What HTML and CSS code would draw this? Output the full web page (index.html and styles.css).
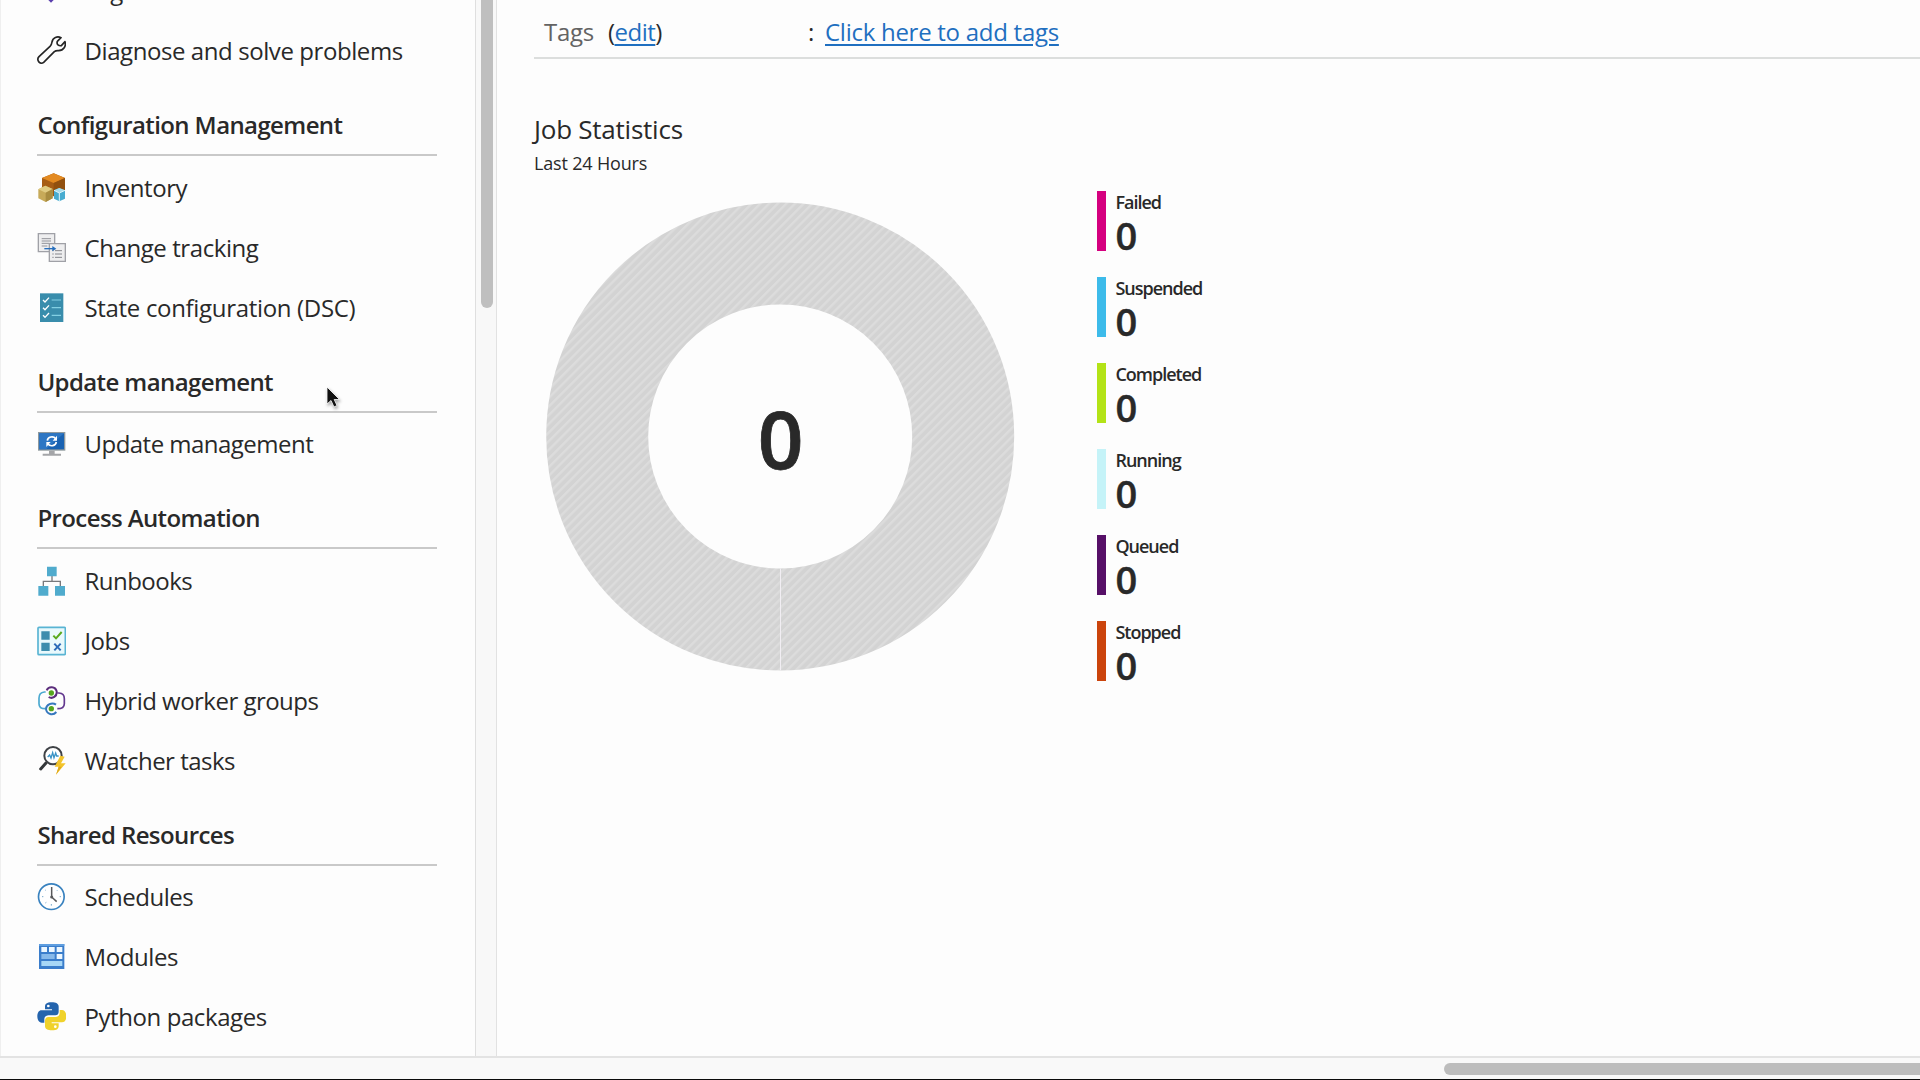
FILE: index.html
```html
<!DOCTYPE html>
<html lang="en">
<head>
<meta charset="utf-8">
<title>Automation Account</title>
<link rel="stylesheet" href="styles.css">
</head>
<body>
<div class="app">
  <div class="panes">
    <nav class="sidebar">
      <div class="menu">
        <a class="item"><svg class="icon" viewBox="108 -72 90 90"><path d="M153 8 116 -29V-66H153L190 -29Z" fill="#5b3fae"/></svg><span class="label">Tags</span></a>
        <a class="item"><svg class="icon" viewBox="108 108 90 90"><path d="M183 113C172 107 158 113 156 126Q155 134 150 139L117 170C108 180 120 196 131 187L163 155Q168 151 176 152C191 151 199 138 195 125L184 137Q178 138 173 134Q170 129 172 124Z" fill="none" stroke="#252525" stroke-width="5" stroke-linejoin="round"/></svg><span class="label">Diagnose and solve problems</span></a>
        <h2 class="heading">Configuration Management</h2>
        <a class="item"><svg class="icon" viewBox="48 36 90 90"><path d="M101 37 135 51V92L101 106 66 92V51Z" fill="#a75d15"/><path d="M101 37 135 51 101 66 66 51Z" fill="#e38a21"/><path d="M101 66 135 51V92L101 106Z" fill="#91500f"/><path d="M76 74 98 84V112L77 123 55 112V85Z" fill="#c7aa59"/><path d="M76 74 98 84 77 95 55 85Z" fill="#e0cb82"/><path d="M77 95 98 84V112L77 123Z" fill="#a88c40"/><path d="M118 81 135 88V113L118 121 102 113V88Z" fill="#48acd0"/><path d="M118 81 135 88 118 96 102 88Z" fill="#a9dceb"/><path d="M118 96V121M102 88 118 96 135 88" stroke="#dff4fa" stroke-width="3" fill="none"/></svg><span class="label">Inventory</span></a>
        <a class="item"><svg class="icon" viewBox="48 216 90 90"><path d="M55 218H104V272H55Z" fill="#eeeeef" stroke="#a0a1a7" stroke-width="4"/><path d="M65 233H93M65 240H93M65 247H88M65 255H82" stroke="#929399" stroke-width="3"/><path d="M88 248H136V301H88Z" fill="#eeeeef" stroke="#a0a1a7" stroke-width="4"/><path d="M97 269H101M105 269H126M97 279H101M105 279H126M97 289H101M105 289H126" stroke="#85868c" stroke-width="3"/><path d="M73 263H101" stroke="#286fbd" stroke-width="4"/><path d="M97 255 109 263 97 271Z" fill="#286fbd"/></svg><span class="label">Change tracking</span></a>
        <a class="item"><svg class="icon" viewBox="48 396 90 90"><path d="M60 397H130V483H60Z" fill="#398dac"/><path d="M69 417 75 423 87 410M69 440 75 446 87 433M69 463 75 469 87 456" fill="none" stroke="#fff" stroke-width="4"/><path d="M95 417H123M95 440H123M95 463H123" stroke="#83d0e3" stroke-width="3.5"/></svg><span class="label wide">State configuration (DSC)</span></a>
        <h2 class="heading">Update management</h2>
        <a class="item"><svg class="icon" viewBox="48 207 90 90"><path d="M54 216H136V272H54Z" fill="#8f999d"/><path d="M58 220H132V268H58Z" fill="#1962b2"/><path d="M58 220H132L78 268H58Z" fill="#2c76c4"/><path d="M87 272H104V281H123V287H68V281H87Z" fill="#a4a5a8"/><path d="M82 242C83 230 100 227 107 236M109 246C107 258 91 261 84 252" fill="none" stroke="#fff" stroke-width="5"/><path d="M111 227V242H98ZM79 261V246H92Z" fill="#fff"/></svg><span class="label tight">Update management</span></a>
        <h2 class="heading">Process Automation</h2>
        <a class="item"><svg class="icon" viewBox="48 15 90 90"><path d="M96 43V61M70 77V61H121V77" fill="none" stroke="#78797c" stroke-width="4"/><path d="M81 17H110V46H81ZM55 75H85V104H55ZM105 75H135V104H105Z" fill="#50abcd"/></svg><span class="label tight">Runbooks</span></a>
        <a class="item"><svg class="icon" viewBox="48 195 90 90"><rect x="54" y="199" width="82" height="82" rx="3" fill="#e9f9fc" stroke="#59b4d3" stroke-width="5"/><path d="M64 211H89V236H64ZM64 245H89V270H64Z" fill="#3d8dad"/><path d="M100 224 108 232 125 213" fill="none" stroke="#59a91d" stroke-width="6"/><path d="M103 248 122 268M122 248 103 268" stroke="#2b6bb8" stroke-width="6"/></svg><span class="label">Jobs</span></a>
        <a class="item"><svg class="icon" viewBox="48 375 90 90"><path d="M77 393H73Q57 395 57 411V428Q57 443 76 443" fill="none" stroke="#4ba9d0" stroke-width="5"/><path d="M112 396H117Q133 397 133 413V428Q133 443 112 443" fill="none" stroke="#63388f" stroke-width="5"/><path d="M80 388C86 375 106 376 110 391C112 406 97 415 86 408" fill="none" stroke="#5b2d7c" stroke-width="6"/><path d="M108 431C96 422 78 431 78 444C80 460 99 465 109 453" fill="none" stroke="#3678be" stroke-width="6"/><circle cx="94" cy="396" r="8" fill="#55a51c"/><circle cx="94" cy="443" r="8" fill="#55a51c"/></svg><span class="label tight">Hybrid worker groups</span></a>
        <a class="item"><svg class="icon" viewBox="48 555 90 90"><path d="M78 606 62 624" stroke="#34373a" stroke-width="9" stroke-linecap="round"/><circle cx="99" cy="584" r="26" fill="#fff" stroke="#3f4246" stroke-width="6"/><path d="M83 588 89 582 93 591 98 575 102 590 107 576 110 585H116" fill="none" stroke="#3993c6" stroke-width="4"/><path d="M121 584 104 617H116L108 641 137 607H123L134 587Z" fill="#f3c42b"/><path d="M116 617H125L108 641Z" fill="#dda81c"/></svg><span class="label tight">Watcher tasks</span></a>
        <h2 class="heading">Shared Resources</h2>
        <a class="item"><svg class="icon" viewBox="48 66 90 90"><circle cx="94" cy="110" r="38.5" fill="#fff" stroke="#3982bf" stroke-width="5"/><path d="M95 81V111L110 125" fill="none" stroke="#58595b" stroke-width="4.5"/><circle cx="95" cy="111" r="4.5" fill="#58595b"/><path d="M94 132V137M66 110H70M119 110H123M76 90 78 92M113 90 111 92M76 129 79 127" stroke="#78a9cc" stroke-width="3"/></svg><span class="label tight">Schedules</span></a>
        <a class="item"><svg class="icon" viewBox="48 246 90 90"><path d="M57 252H133V327H57Z" fill="#3a7dcb"/><path d="M57 252H133V258H57Z" fill="#5e9ee0"/><path d="M64 261H81V276H64ZM87 261H104V276H87ZM110 261H127V276H110ZM110 282H127V297H110Z" fill="#ecf7ff"/><path d="M64 282H104V297H64Z" fill="#86b9ea"/><path d="M64 303H127V318H64Z" fill="#a7d7f6"/></svg><span class="label">Modules</span></a>
        <a class="item"><svg class="icon" viewBox="48 426 90 90"><path d="M95 427C80 427 75 432 75 440V448H96V451H65C56 451 52 459 52 469C52 480 57 488 65 488H73V478C73 470 79 466 86 466H106C112 466 116 462 116 456V440C116 431 108 427 95 427Z" fill="#2464ad"/><path d="M96 511C111 511 116 506 116 498V490H95V487H126C135 487 139 479 139 469C139 458 134 450 126 450H119V460C119 467 113 471 106 471H86C79 471 75 476 75 482V498C75 507 83 511 96 511Z" fill="#f0d22b"/><circle cx="85" cy="438" r="4" fill="#fff"/><circle cx="106" cy="500" r="4" fill="#fff"/></svg><span class="label">Python packages</span></a>
      </div>
    </nav>
    <div class="vscroll"><div class="vthumb"></div></div>
    <main class="main">
      <div class="tagrow">
        <div class="taglabel"><span class="muted">Tags</span><span class="edit">(<a class="link">edit</a>)</span></div>
        <span class="colon">:</span>
        <a class="link">Click here to add tags</a>
      </div>
      <h1 class="title">Job Statistics</h1>
      <p class="subtitle">Last 24 Hours</p>
      <div class="stats">
        <svg class="donut" viewBox="0 0 470 470">
          <defs><pattern id="hatch" width="6.12" height="6.12" patternUnits="userSpaceOnUse" patternTransform="rotate(45)"><rect width="6.12" height="6.12" fill="#d3d3d3"/><rect width="2.4" height="6.12" fill="#dcdcdc"/></pattern></defs>
          <circle cx="235.2" cy="235.5" r="183" fill="none" stroke="url(#hatch)" stroke-width="102"/>
          <path d="M235.5 367.5V469.5" stroke="#f1eef3" stroke-width="1"/>
          <text class="total" x="235.5" y="267.5" text-anchor="middle">0</text>
        </svg>
        <ul class="legend">
          <li class="stat failed"><span class="name">Failed</span><span class="count">0</span></li>
          <li class="stat suspended"><span class="name">Suspended</span><span class="count">0</span></li>
          <li class="stat completed"><span class="name">Completed</span><span class="count">0</span></li>
          <li class="stat running"><span class="name">Running</span><span class="count">0</span></li>
          <li class="stat queued"><span class="name">Queued</span><span class="count">0</span></li>
          <li class="stat stopped"><span class="name">Stopped</span><span class="count">0</span></li>
        </ul>
      </div>
    </main>
  </div>
  <div class="hscroll"><div class="hthumb"></div></div>
  <svg class="cursor" viewBox="0 0 16 24"><path d="M1 1V18L5 14.5 8 21 11 19.5 8.2 13.5H13.5Z" fill="#111" stroke="#fff" stroke-width=".8"/></svg>
</div>
</body>
</html>
```
FILE: styles.css
```css
* { box-sizing: border-box; }
body { margin: 0; background: #fdfdfd; color: #292929; font-family: "Open Sans", "Noto Sans", sans-serif; font-size: 24px; }
h1, h2, p, ul { margin: 0; padding: 0; font-weight: 400; }
.app { position: relative; display: flex; flex-direction: column; width: 1920px; height: 1080px; overflow: hidden; border-bottom: 1px solid #0b0b0b; }
.panes { display: flex; flex: 1; min-height: 0; }
.sidebar { width: 475px; overflow: hidden; border-left: 1px solid #efefef; padding: 0 37.6px 0 35px; }
.menu { display: flex; flex-direction: column; margin-top: -38.9px; }
.item { display: flex; align-items: center; flex: none; height: 60px; gap: 18.5px; white-space: nowrap; }
.icon { width: 30px; height: 30px; flex: none; }
.label { padding-bottom: 1.2px; letter-spacing: -.42px; }
.tight { letter-spacing: -.52px; }
.wide { letter-spacing: -.32px; }
.heading { flex: none; height: 75px; margin: 0 0 1.5px 1.4px; padding-top: 27px; border-bottom: 2px solid #c9c9c9; font-size: 24px; font-weight: 600; line-height: 34px; letter-spacing: -.6px; white-space: nowrap; }
.vscroll { width: 22px; background: #f8f8f8; border-left: 1px solid #dfdfdf; border-right: 1px solid #e2e2e2; padding-left: 5px; }
.vthumb { width: 12px; height: 308px; background: #bfbfbf; border-radius: 0 0 6px 6px; }
.main { flex: 1; padding-left: 37px; }
.tagrow { display: flex; align-items: center; height: 59px; padding: 6px 0 0 10px; border-bottom: 2px solid #dcdedd; line-height: 34px; letter-spacing: -.27px; }
.taglabel { display: flex; gap: 14px; width: 264px; }
.muted { color: #636363; }
.edit { letter-spacing: -.5px; }
.link { color: #1f6fc0; text-decoration: underline; text-decoration-thickness: 2px; text-underline-offset: 3px; }
.colon { width: 17px; }
.title { margin-top: 52px; font-size: 26px; line-height: 36px; letter-spacing: -.24px; }
.subtitle { margin-top: 3px; font-size: 18px; line-height: 26px; letter-spacing: -.18px; }
.stats { display: flex; margin-top: 15px; }
.donut { width: 470px; height: 470px; margin: 10px 0 0 11px; overflow: visible; }
.total { font-size: 80px; font-weight: 600; fill: #292929; stroke: #292929; stroke-width: .8px; }
.legend { display: flex; flex-direction: column; gap: 26.1px; margin-left: 82px; list-style: none; }
.stat { display: flex; flex-direction: column; height: 60px; padding-left: 9.4px; border-left: 9px solid; }
.name { color: #292929; font-size: 18px; font-weight: 600; line-height: 22px; letter-spacing: -1px; }
.count { color: #292929; font-size: 38px; font-weight: 600; line-height: 44px; -webkit-text-stroke: .4px #292929; }
.failed { border-color: #d5007f; }
.suspended { border-color: #3dbbea; }
.completed { border-color: #b3e317; }
.running { border-color: #c5f3f8; }
.queued { border-color: #561067; }
.stopped { border-color: #cb440c; }
.hscroll { height: 23px; flex: none; background: #f9f9f9; border-top: 2px solid #e3e3e3; padding: 5px 0 0 1444px; }
.hthumb { height: 12px; background: #bdbdbd; border-radius: 6px 0 0 6px; }
.cursor { position: absolute; left: 326px; top: 386px; width: 16px; height: 24px; filter: drop-shadow(1px 2px 1.5px rgba(0, 0, 0, .35)); }
```
